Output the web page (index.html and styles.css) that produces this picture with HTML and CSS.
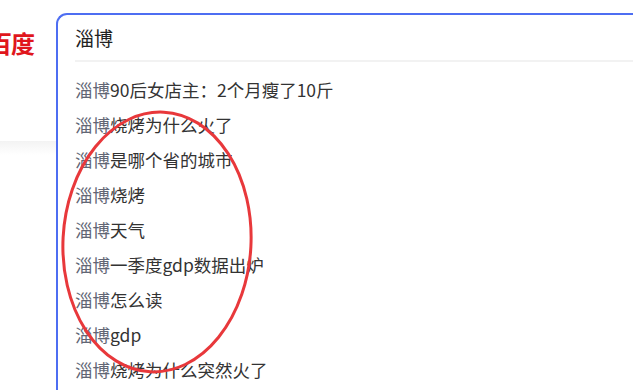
FILE: index.html
```html
<!DOCTYPE html>
<html lang="zh">
<head>
<meta charset="utf-8">
<link rel="stylesheet" href="styles.css">
</head>
<body>
<div class="page">
  <div class="logo-col">
    <div class="logo">百度</div>
    <div class="shade"></div>
  </div>
  <div class="search">
    <div class="input">淄博</div>
    <div class="divider"></div>
    <ul class="sugs">
      <li><span class="pre">淄博</span>90后女店主：2个月瘦了10斤</li>
      <li><span class="pre">淄博</span>烧烤为什么火了</li>
      <li><span class="pre">淄博</span>是哪个省的城市</li>
      <li><span class="pre">淄博</span>烧烤</li>
      <li><span class="pre">淄博</span>天气</li>
      <li><span class="pre">淄博</span>一季度gdp数据出炉</li>
      <li><span class="pre">淄博</span>怎么读</li>
      <li><span class="pre">淄博</span>gdp</li>
      <li><span class="pre">淄博</span>烧烤为什么突然火了</li>
    </ul>
  </div>
  <svg class="mark" width="638" height="390" viewBox="0 0 638 390">
    <ellipse cx="157" cy="242" rx="94" ry="130" transform="rotate(3 157 242)" fill="none" stroke="#e8383b" stroke-width="3"/>
  </svg>
</div>
</body>
</html>
```
FILE: styles.css
```css
* { box-sizing: border-box; }
html, body {
  margin: 0;
  padding: 0;
  background: #fff;
}
body {
  width: 638px;
  height: 390px;
  overflow: hidden;
  font-family: "Noto Sans CJK SC", "Liberation Sans", sans-serif;
}
.page {
  position: relative;
  display: flex;
  height: 390px;
}
.logo-col {
  width: 56px;
  flex: none;
  overflow: hidden;
  display: flex;
  flex-direction: column;
}
.logo {
  margin-top: 28px;
  margin-left: -12px;
  white-space: nowrap;
  font-size: 24px;
  font-weight: 700;
  line-height: 30px;
  color: #e0161c;
  letter-spacing: -1px;
}
.shade {
  margin-top: 83px;
  height: 14px;
  background: linear-gradient(#f3f3f3, #fff);
}
.search {
  margin-top: 13px;
  width: 577px;
  flex: none;
  border-top: 2px solid #4e6ef2;
  border-left: 2px solid #4e6ef2;
  border-top-left-radius: 11px;
}
.input {
  padding: 9px 0 8px 17px;
  font-size: 19px;
  line-height: 28px;
  color: #222;
}
.divider {
  margin-left: 17px;
  height: 2px;
  background: #f2f2f2;
}
.sugs {
  list-style: none;
  margin: 0;
  padding: 10px 0 0 17px;
}
.sugs li {
  height: 35px;
  line-height: 35px;
  font-size: 17.5px;
  color: #333;
  white-space: nowrap;
}
.pre { color: #626675; }
.mark {
  position: absolute;
  left: 0;
  top: 0;
  pointer-events: none;
}
```
